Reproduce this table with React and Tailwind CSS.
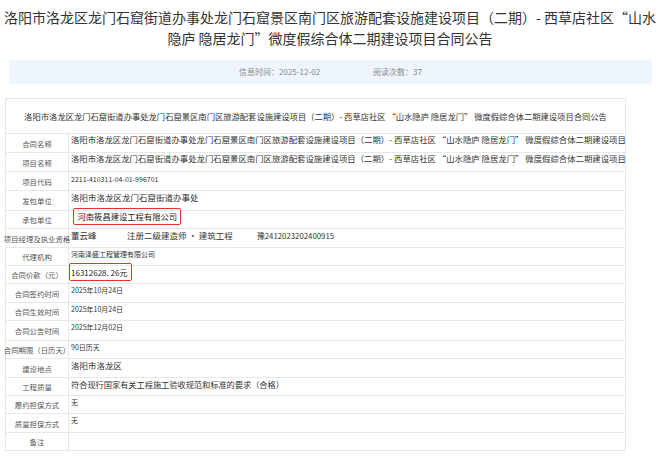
import React from "react";

const FONT = { fontFamily: '"Noto Sans CJK SC", "Noto Sans", sans-serif' };

const LONG =
  "洛阳市洛龙区龙门石窟街道办事处龙门石窟景区南门区旅游配套设施建设项目（二期）- 西草店社区 “山水隐庐 隐居龙门” 微度假综合体二期建设项目";

function Boxed({ children, className }) {
  return (
    <span
      className={
        "inline-flex items-center border-[1.5px] border-[#e0352b] rounded-[2px] " +
        className
      }
    >
      {children}
    </span>
  );
}

const rows = [
  { h: "h-[19px]", label: "合同名称", value: <span className="text-[8.38px] whitespace-nowrap">{LONG}</span> },
  { h: "h-[19px]", label: "项目名称", value: <span className="text-[8.38px] whitespace-nowrap">{LONG}</span> },
  { h: "h-[19px]", label: "项目代码", value: <span className="text-[7px] mt-[2px]">2211-410311-04-01-996701</span> },
  { h: "h-[20px]", label: "发包单位", value: <span className="text-[8.5px] mt-[1px]">洛阳市洛龙区龙门石窟街道办事处</span> },
  {
    h: "h-[18px]",
    label: "承包单位",
    value: (
      <Boxed className="h-[17px] -mt-[3px] ml-[2px] pl-[3.5px] pr-[3px] text-[8.3px] text-[#222]">
        河南筱昌建设工程有限公司
      </Boxed>
    ),
  },
  {
    h: "h-[19px]",
    label: "项目经理及执业资格",
    value: (
      <div className="flex text-[8.5px] whitespace-nowrap mt-[1px]">
        <span className="w-[56px]">董云峰</span>
        <span className="w-[130px]">注册二级建造师 · 建筑工程</span>
        <span className="text-[7.8px]">豫2412023202400915</span>
      </div>
    ),
  },
  { h: "h-[18px]", label: "代理机构", value: <span className="text-[7px] mt-[1px]">河南泽盛工程管理有限公司</span> },
  {
    h: "h-[18px]",
    label: "合同价款（元）",
    value: (
      <Boxed className="h-[18px] -mt-[3px] -ml-[2px] pl-[1px] pr-[4px] text-[8px] text-[#222]">
        16312628. 26元
      </Boxed>
    ),
  },
  { h: "h-[19px]", label: "合同签约时间", value: <span className="text-[7px] mt-[1px]">2025年10月24日</span> },
  { h: "h-[18px]", label: "合同生效时间", value: <span className="text-[7px] mt-[1px]">2025年10月24日</span> },
  { h: "h-[20px]", label: "合同公告时间", value: <span className="text-[7px] mt-[1px]">2025年12月02日</span> },
  { h: "h-[18px]", label: "合同期限（日历天）", value: <span className="text-[7px] mt-[1px]">90日历天</span> },
  { h: "h-[19px]", label: "建设地点", value: <span className="text-[8.5px] mt-[1px]">洛阳市洛龙区</span> },
  {
    h: "h-[18px]",
    label: "工程质量",
    value: <span className="text-[8.2px] mt-[1px]">符合现行国家有关工程施工验收规范和标准的要求（合格）</span>,
  },
  { h: "h-[18px]", label: "履约担保方式", value: <span className="text-[7px] mt-[1px]">无</span> },
  { h: "h-[19px]", label: "质量担保方式", value: <span className="text-[7px] mt-[1px]">无</span> },
  { h: "h-[18px]", label: "备注", value: null },
];

export default function App() {
  return (
    <div className="w-[660px] h-[458px] bg-white text-[#333] overflow-hidden" style={FONT}>
      {/* title */}
      <div className="pt-[7px] text-center text-[14px] leading-[21px] text-[#333]">
        <div className="whitespace-nowrap">
          洛阳市洛龙区龙门石窟街道办事处龙门石窟景区南门区旅游配套设施建设项目（二期）- 西草店社区“山水
        </div>
        <div className="whitespace-nowrap">隐庐 隐居龙门”微度假综合体二期建设项目合同公告</div>
      </div>

      {/* info bar */}
      <div className="mt-[11px] ml-[9px] w-[643px] h-[24px] bg-[#eef5fc] flex items-center justify-center gap-[53px] text-[8px] text-[#888]">
        <span>信息时间：2025-12-02</span>
        <span>阅读次数：37</span>
      </div>

      {/* contract table */}
      <div className="mt-[14px] ml-[5px] w-[621px] border border-b-0 border-[#e8e8e8]">
        <div className="h-[35px] flex items-center justify-center border-b border-[#e8e8e8] text-[8.3px] whitespace-nowrap text-[#333]">
          洛阳市洛龙区龙门石窟街道办事处龙门石窟景区南门区旅游配套设施建设项目（二期）- 西草店社区 “山水隐庐 隐居龙门” 微度假综合体二期建设项目合同公告
        </div>
        {rows.map((r) => (
          <div key={r.label} className={"flex border-b border-[#e8e8e8] " + r.h}>
            <div className="w-[63px] shrink-0 border-r border-[#e8e8e8] flex items-center justify-center whitespace-nowrap text-[7.4px] text-[#555] pt-[1px]">
              {r.label}
            </div>
            <div className="flex-1 min-w-0 pl-[2px] flex items-start text-[#333] leading-[11px]">
              {r.value}
            </div>
          </div>
        ))}
      </div>
    </div>
  );
}
